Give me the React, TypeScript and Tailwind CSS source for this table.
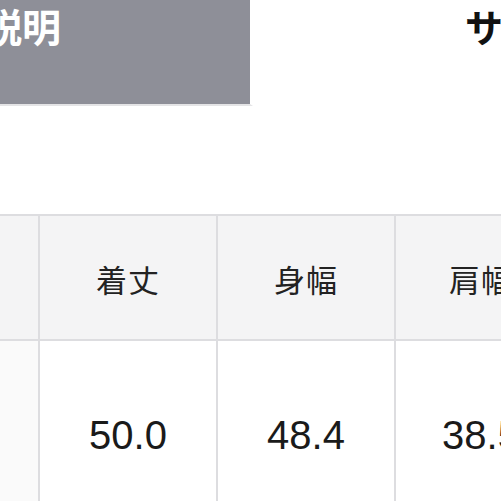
export default function App() {
  const jp = { fontFamily: '"Noto Sans CJK JP", "Noto Sans", sans-serif' };
  const num = { fontFamily: '"Liberation Sans", Arial, sans-serif' };
  const headers = ["", "着丈", "身幅", "肩幅"];
  const values = ["", "50.0", "48.4", "38.5"];
  return (
    <div className="w-[501px] h-[501px] overflow-hidden bg-white relative" style={jp}>
      <div className="flex h-[106px]">
        <div className="w-[253px] h-[106px] border-r-[3px] border-b-[2px] border-r-white border-b-[#e4e4e6] bg-[#8e8f98] overflow-hidden flex">
          <div className="ml-[-17px] mt-[0px] text-[39px] leading-[50px] font-bold text-white whitespace-nowrap">説明</div>
        </div>
        <div className="flex-1 flex justify-end overflow-hidden">
          <div className="mr-[-40px] mt-[1px] text-[38px] leading-[50px] font-bold text-[#111] whitespace-nowrap">サイ</div>
        </div>
      </div>
      <div className="mt-[108px] border-t-2 border-[#dddde0] w-[700px]">
        <div className="grid grid-cols-[40px_178px_178px_300px] bg-[#f4f4f5] border-b-2 border-[#dddde0] h-[125px]">
          {headers.map((h, i) => (
            <div key={i} className="border-r-2 border-[#dddde0] flex items-center justify-center pt-[4px]">
              <div className="text-[31px] text-[#222] tracking-[1px]" style={i === 3 ? { marginLeft: "-128px" } : {}}>{h}</div>
            </div>
          ))}
        </div>
        <div className="grid grid-cols-[40px_178px_178px_300px] bg-white h-[190px]">
          {values.map((v, i) => (
            <div key={i} className={`border-r-2 border-[#dddde0] flex items-start justify-center pt-[72px] ${i === 0 ? "bg-[#fafafa]" : ""}`}>
              <div className="text-[40px] leading-[44px] text-[#1a1a1a]" style={i === 3 ? { ...num, marginLeft: "-128px" } : num}>{v}</div>
            </div>
          ))}
        </div>
      </div>
    </div>
  );
}
